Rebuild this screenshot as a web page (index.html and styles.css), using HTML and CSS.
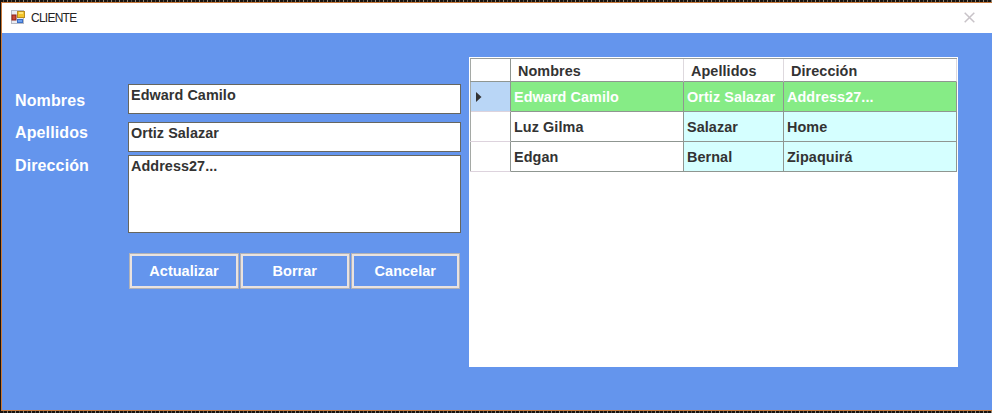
FILE: index.html
```html
<!DOCTYPE html>
<html lang="es">
<head>
<meta charset="utf-8">
<title>CLIENTE</title>
<link rel="stylesheet" href="styles.css">
</head>
<body>
<div class="window">
  <header class="titlebar">
    <svg class="app-icon" width="14" height="14" viewBox="0 0 14 14">
      <rect x=".5" y=".5" width="12" height="13" fill="#e9ebf2" stroke="#b6bac4"/>
      <rect x="6.5" y="1.5" width="7" height="6" fill="#f4c52b" stroke="#b98d20"/>
      <path d="M8 2h4v2H8z" fill="#ffe577"/>
      <rect x="1" y="5" width="4" height="5" fill="#c94a35" stroke="#8f2119"/>
      <rect x="6.5" y="9.5" width="5" height="3" fill="#6a9ff0" stroke="#3c6fc4"/>
    </svg>
    <span class="title">CLIENTE</span>
    <svg class="close" width="11" height="11" viewBox="0 0 11 11"><path d="M.7.7l9.6 9.6M10.3.7L.7 10.3" stroke="#c8c3c8" stroke-width="1.5"/></svg>
  </header>
  <main class="content">
    <section class="form">
      <label class="label first">Nombres</label><div class="field">Edward Camilo</div>
      <label class="label">Apellidos</label><div class="field">Ortiz Salazar</div>
      <label class="label third">Dirección</label><div class="field area">Address27...</div>
      <div class="actions">
        <button class="btn">Actualizar</button>
        <button class="btn">Borrar</button>
        <button class="btn">Cancelar</button>
      </div>
    </section>
    <section class="grid-panel">
      <div class="grid">
        <div class="cell head corner"></div><div class="cell head">Nombres</div><div class="cell head">Apellidos</div><div class="cell head">Dirección</div>
        <div class="cell row-head current"><svg width="6" height="10" viewBox="0 0 6 10"><path d="M0 0l5.5 5L0 10z" fill="#333"/></svg></div><div class="cell selected">Edward Camilo</div><div class="cell selected">Ortiz Salazar</div><div class="cell selected">Address27...</div>
        <div class="cell row-head"></div><div class="cell">Luz Gilma</div><div class="cell tinted">Salazar</div><div class="cell tinted">Home</div>
        <div class="cell row-head"></div><div class="cell">Edgan</div><div class="cell tinted">Bernal</div><div class="cell tinted">Zipaquirá</div>
      </div>
    </section>
  </main>
</div>
</body>
</html>
```
FILE: styles.css
```css
* { box-sizing: border-box; }
body {
  margin: 0;
  height: 413px;
  padding: 2px 0 2px 1px;
  overflow: hidden;
  background: repeating-linear-gradient(90deg, #17130f 0 3px, #55514a 3px 4px, #17130f 4px 7px, #8b8578 7px 8px);
  font-family: "Liberation Sans", Arial, sans-serif;
}
.window {
  height: 409px;
  border: 1px solid #c87a3c;
  border-right: 0;
  background: #6495ed;
}
.titlebar {
  height: 30px;
  padding: 0 17px 2px 9px;
  display: flex;
  align-items: center;
  background: #fff;
}
.title {
  margin: 2px 0 0 6px;
  font-size: 12px;
  letter-spacing: -0.75px;
  color: #222;
}
.close { margin-left: auto; }
.content {
  display: flex;
  align-items: flex-start;
}
.form {
  width: 467px;
  padding: 51px 8px 0 13px;
  display: grid;
  grid-template-columns: 113px 333px;
  grid-template-rows: 30px 30px 73px;
  row-gap: 8px;
}
.label {
  padding-top: 2px;
  font-size: 16px;
  line-height: 18px;
  letter-spacing: 0.12px;
  font-weight: bold;
  color: #fff;
}
.first { padding-top: 8px; }
.third {
  margin-top: -5px;
  padding-top: 2px;
}
.field {
  padding: 2px;
  border: 1px solid #66665f;
  background: #fff;
  font-size: 14.4px;
  line-height: 17px;
  letter-spacing: 0.06px;
  font-weight: bold;
  color: #333;
}
.area {
  height: 78px;
  margin-top: -5px;
}
.actions {
  grid-column: 2;
  padding: 12px 0 0 1px;
  display: flex;
  gap: 1px;
}
.btn {
  width: 110px;
  height: 36px;
  padding: 0;
  border: 1px solid #b0b1b8;
  box-shadow: inset 0 0 0 2px #e9e2df;
  background: transparent;
  font: bold 14.5px "Liberation Sans", Arial, sans-serif;
  color: #fff;
}
.btn + .btn { width: 109.5px; }
.grid-panel {
  width: 489px;
  height: 310px;
  margin-top: 24px;
  padding: 1px;
  background: #fff;
}
.grid {
  width: 487px;
  display: grid;
  grid-template-columns: 41px 173px 100px 173px;
  grid-template-rows: 23px 30px 30px 30px;
  border-top: 1px solid #999d99;
  box-shadow: inset 1px 0 #a5a9a5;
}
.cell {
  padding: 0 3px;
  border-right: 1px solid #8f9691;
  border-bottom: 1px solid #8f9691;
  font-size: 14.4px;
  line-height: 30px;
  letter-spacing: 0.08px;
  font-weight: bold;
  color: #333;
  white-space: nowrap;
}
.head {
  padding-left: 7px;
  line-height: 24px;
  border-right-color: #ded9de;
}
.corner { border-right-color: #8f9691; }
.row-head {
  padding: 0 0 0 6px;
  display: flex;
  align-items: center;
  border-bottom-color: #ddd3dd;
}
.current {
  margin-left: 1px;
  padding-left: 5px;
  background: #b9d6f6;
}
.selected {
  background: #86ec86;
  color: #fff;
}
.tinted { background: #d5ffff; }
```
